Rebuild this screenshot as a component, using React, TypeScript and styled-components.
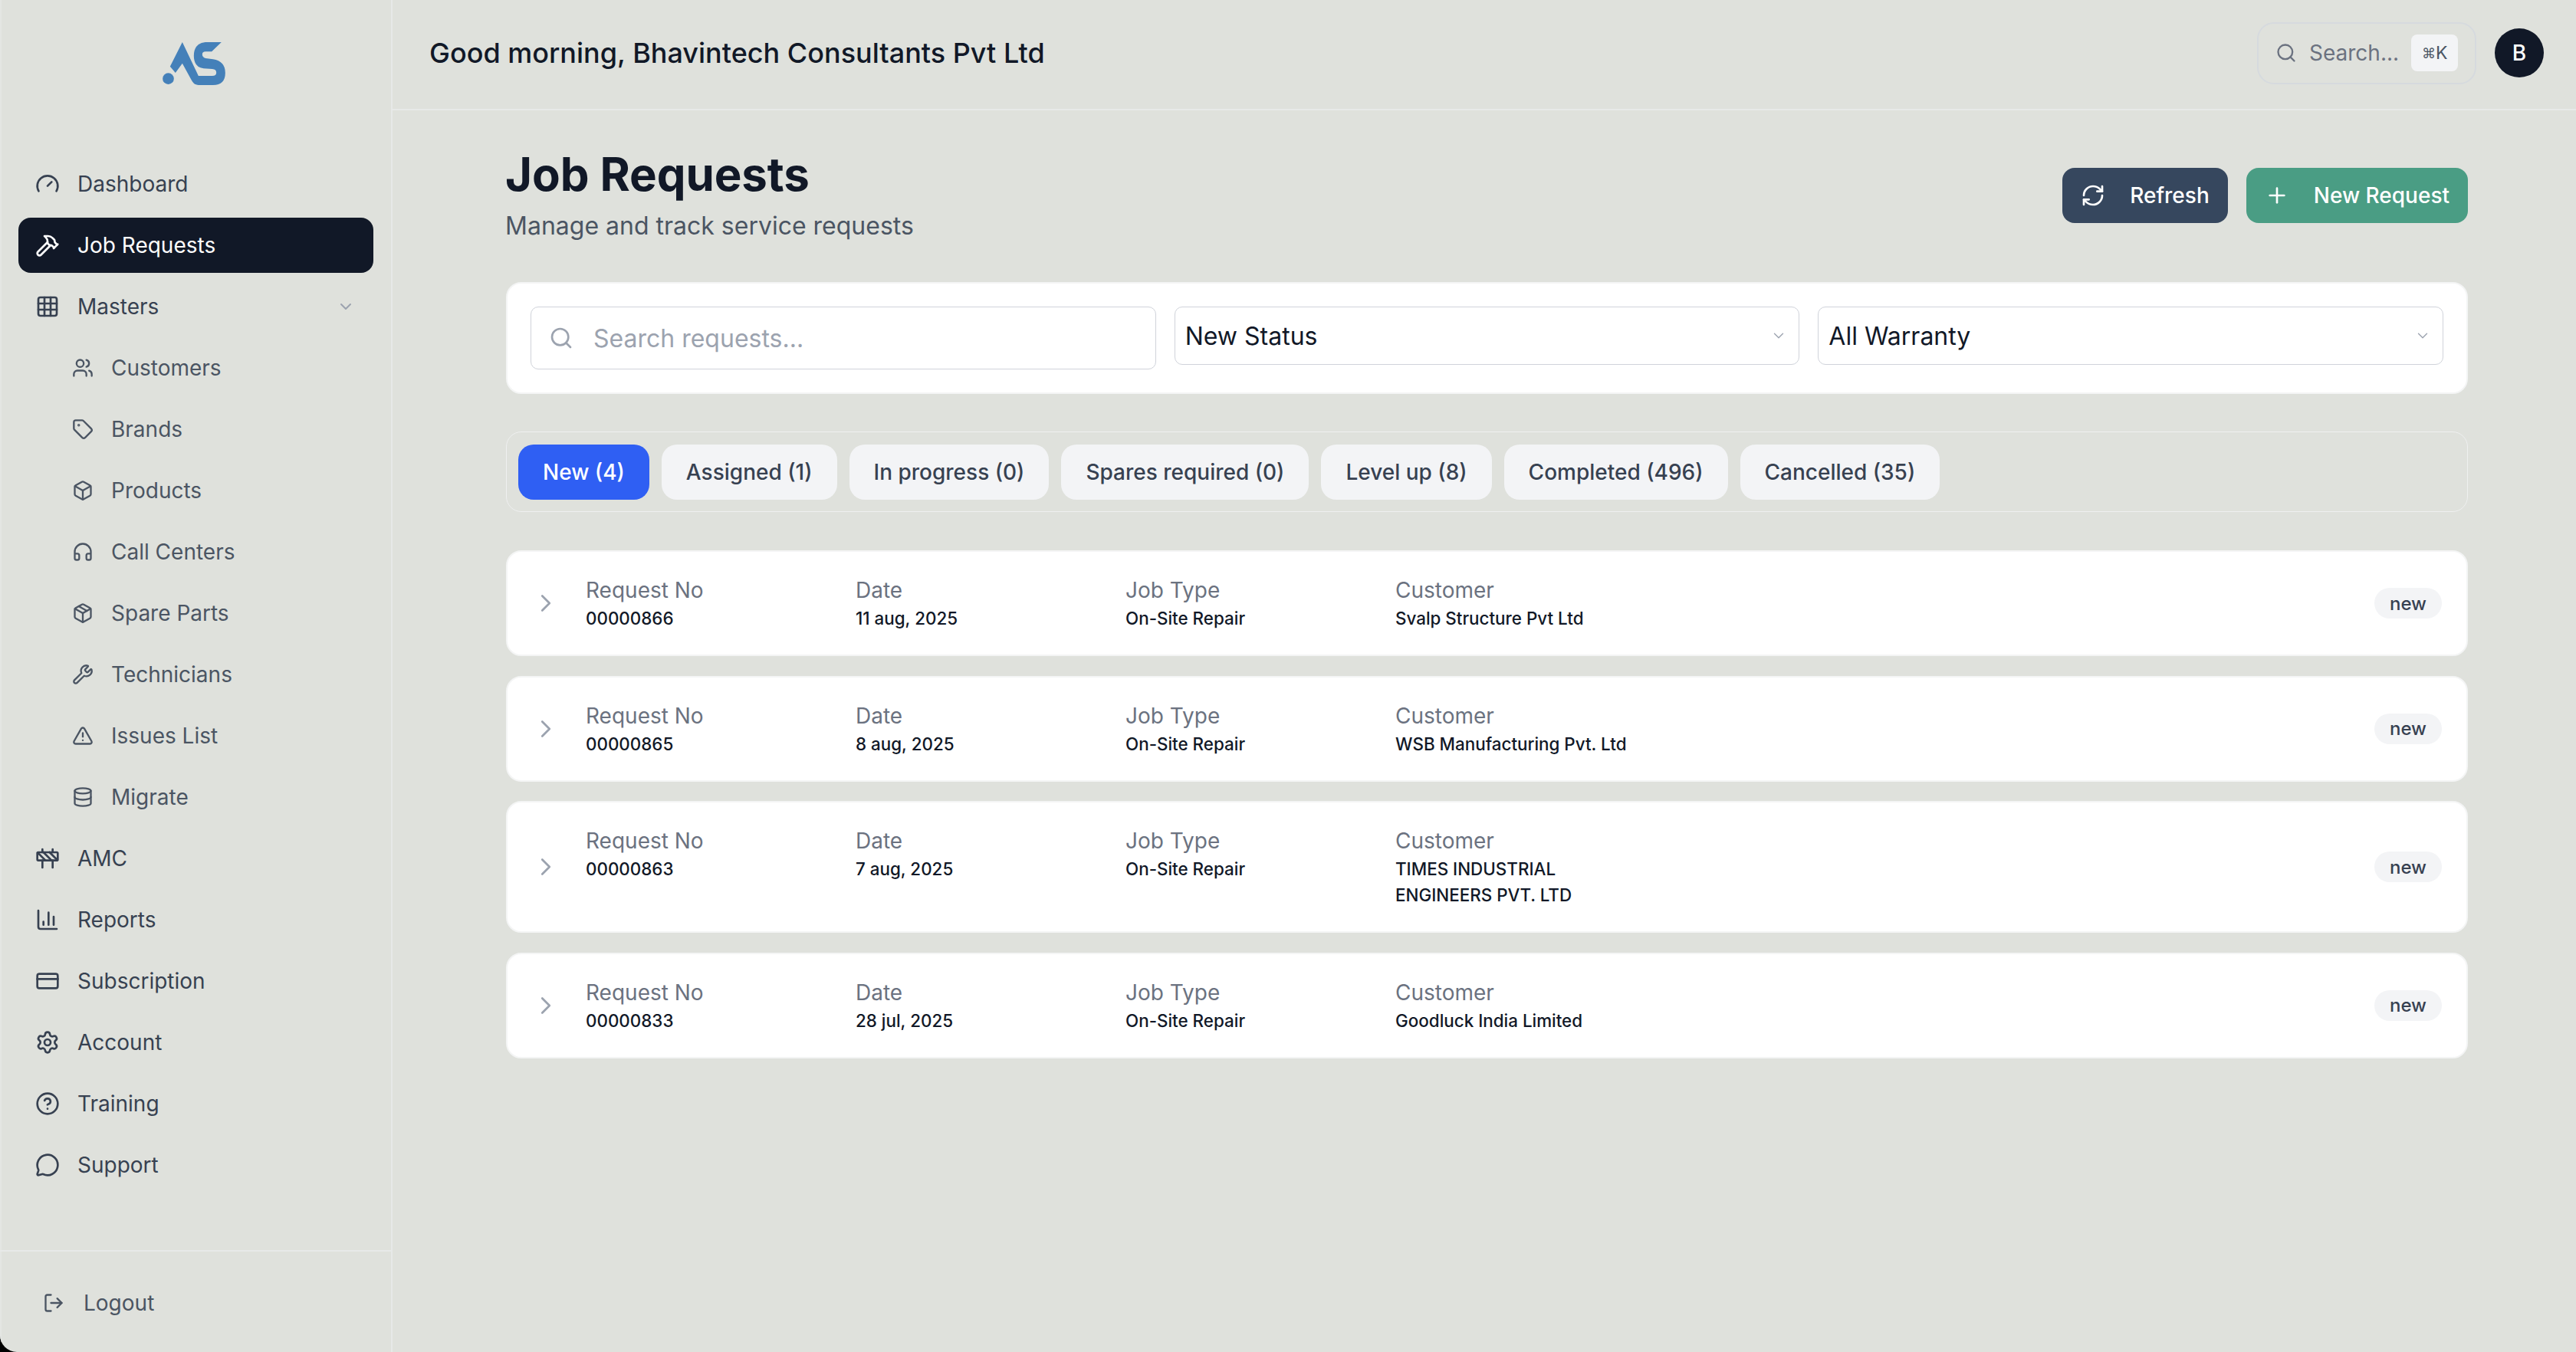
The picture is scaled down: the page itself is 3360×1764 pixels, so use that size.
import React from "react";
import styled, { createGlobalStyle } from "styled-components";
import {
  Gauge, Hammer, Grid3x3, Users, Tag, Box, Headphones, Package, Wrench, TriangleAlert, Database,
  Construction, ChartColumn, CreditCard, Settings, CircleHelp, MessageCircle, LogOut, ChevronDown,
  ChevronRight, Search, RefreshCw, Plus,
} from "lucide-react";

const Global = createGlobalStyle`
  html, body { margin: 0; padding: 0; background: #000; }
  * { box-sizing: border-box; }
  body { font-family: Inter, "Liberation Sans", sans-serif; }
`;

const Shell = styled.div`
  display: flex;
  width: 3360px;
  height: 1764px;
  background: #dfe1dc;
  border-radius: 0 0 0 22px;
  overflow: hidden;
`;

const Sidebar = styled.aside`
  width: 512px;
  flex: none;
  display: flex;
  flex-direction: column;
  border-right: 2px solid #e7e9e8;
  border-left: 2px solid #e4e6e3;
`;

const LogoWrap = styled.div`
  display: flex;
  justify-content: center;
  padding: 55px 6px 93px 0;
`;

const Nav = styled.nav`
  flex: 1;
  display: flex;
  flex-direction: column;
  gap: 8px;
  padding: 0 23px 0 22px;
`;

const NavItem = styled.div<{ $active?: boolean; $sub?: boolean }>`
  height: 72px;
  display: flex;
  align-items: center;
  gap: 23px;
  padding-left: ${(p) => (p.$sub ? "70px" : "22px")};
  padding-right: 24px;
  border-radius: 16px;
  font-size: 28px;
  color: ${(p) => (p.$active ? "#ffffff" : p.$sub ? "#4b5563" : "#374151")};
  background: ${(p) => (p.$active ? "#111827" : "transparent")};
  svg { flex: none; }
`;

const NavLabel = styled.span`
  flex: 1;
`;

const MutedChevron = styled(ChevronDown)`
  color: #9ca3af;
`;

const SideFooter = styled.div`
  height: 133px;
  margin-left: -2px;
  border-top: 2px solid #e7e9e8;
  padding: 49px 0 0 56px;
`;

const LogoutRow = styled.div`
  display: flex;
  align-items: center;
  gap: 25px;
  height: 36px;
  font-size: 28px;
  color: #4b5563;
`;

const Main = styled.div`
  flex: 1;
  min-width: 0;
  display: flex;
  flex-direction: column;
`;

const Header = styled.header`
  height: 144px;
  flex: none;
  border-bottom: 2px solid #e7e9e8;
  display: flex;
  align-items: center;
  justify-content: space-between;
  padding: 0 42px 4px 48px;
`;

const Greeting = styled.h2`
  margin: 0;
  font-size: 36px;
  font-weight: 500;
  color: #111827;
`;

const HeaderRight = styled.div`
  display: flex;
  align-items: center;
  gap: 24px;
`;

const HeaderSearch = styled.div`
  width: 286px;
  height: 81px;
  border: 2px solid #d6dade;
  border-radius: 22px;
  display: flex;
  align-items: center;
  padding: 0 23px 0 22px;
  color: #6b7280;
  font-size: 28px;
  gap: 16px;
  svg { flex: none; }
`;

const Kbd = styled.kbd`
  margin-left: auto;
  width: 61px;
  height: 48px;
  flex: none;
  border-radius: 8px;
  background: #f3f4f6;
  color: #4b5563;
  font-family: Inter, "DejaVu Sans", sans-serif;
  font-size: 23px;
  display: flex;
  align-items: center;
  justify-content: center;
`;

const KbdGlyph = styled.span`
  font-size: 18px;
  font-family: "DejaVu Sans", sans-serif;
`;

const Avatar = styled.div`
  width: 64px;
  height: 64px;
  border-radius: 50%;
  background: #111827;
  color: #fff;
  font-size: 28px;
  font-weight: 500;
  display: flex;
  align-items: center;
  justify-content: center;
`;

const Content = styled.main`
  display: flex;
  flex-direction: column;
  gap: 49px;
  padding: 47px 141px 0 148px;
`;

const PageHead = styled.div`
  display: flex;
  align-items: center;
  justify-content: space-between;
`;

const Title = styled.h1`
  margin: 0 0 0 -1px;
  font-size: 60px;
  line-height: 72px;
  font-weight: 700;
  letter-spacing: -0.1px;
  color: #111827;
`;

const Subtitle = styled.p`
  margin: 8px 0 0 -1px;
  font-size: 32px;
  line-height: 48px;
  color: #4b5563;
`;

const Actions = styled.div`
  display: flex;
  gap: 24px;
`;

const ActionButton = styled.button<{ $color: string }>`
  height: 72px;
  border: 0;
  border-radius: 16px;
  padding: 0 24px;
  display: flex;
  align-items: center;
  gap: 32px;
  color: #fff;
  background: ${(p) => p.$color};
  font: 500 28px Inter, sans-serif;
`;

const FilterCard = styled.section`
  background: #fff;
  border: 2px solid #f4f5f5;
  border-radius: 20px;
  padding: 30px;
  display: grid;
  grid-template-columns: repeat(3, 1fr);
  gap: 24px;
  align-items: start;
`;

const SearchField = styled.div`
  height: 82px;
  border: 1px solid #d0d3da;
  border-radius: 10px;
  display: flex;
  align-items: center;
  gap: 26px;
  padding-left: 23px;
  font-size: 32px;
  color: #9ca3af;
`;

const SelectField = styled.div`
  height: 76px;
  border: 1px solid #d0d3da;
  border-radius: 10px;
  display: flex;
  align-items: center;
  justify-content: space-between;
  padding: 0 15px 0 13px;
  font-size: 32px;
  color: #111827;
  svg { color: #9ca3af; }
`;

const TabBar = styled.div`
  display: flex;
  gap: 16px;
  height: 105px;
  align-items: center;
  padding: 0 15px;
  border: 1px solid #eff0f0;
  border-radius: 20px;
`;

const Tab = styled.div<{ $active?: boolean }>`
  height: 72px;
  display: flex;
  align-items: center;
  padding: 0 32px;
  border-radius: 20px;
  font-size: 28px;
  font-weight: 500;
  color: ${(p) => (p.$active ? "#fff" : "#374151")};
  background: ${(p) => (p.$active ? "#2f5ff3" : "#f3f4f6")};
`;

const CardList = styled.div`
  display: flex;
  flex-direction: column;
  gap: 25.5px;
  margin-top: 1px;
`;

const Card = styled.article`
  background: #fff;
  border: 2px solid #f4f5f5;
  border-radius: 20px;
  padding: 30px 32px;
  display: flex;
  align-items: center;
`;

const ExpandIcon = styled(ChevronRight)`
  color: #9ca3af;
  flex: none;
  margin: 0 33px 0 -1px;
`;

const Columns = styled.div`
  flex: 1;
  display: grid;
  grid-template-columns: repeat(4, 320px);
  column-gap: 32px;
`;

const Label = styled.div`
  font-size: 28px;
  line-height: 40px;
  color: #6b7280;
`;

const Value = styled.div`
  font-size: 22.4px;
  line-height: 34px;
  font-weight: 500;
  color: #111827;
`;

const Badge = styled.span`
  height: 40px;
  padding: 0 20px;
  border-radius: 20px;
  background: #f3f4f6;
  color: #374151;
  font-size: 24px;
  font-weight: 500;
  display: flex;
  align-items: center;
`;

const Logo = () => (
  <svg width="82" height="56" viewBox="128 75 245 168" fill="#4480b9">
    <path d="M205 75L268 207L322 207Q338 207 338 194Q338 181 322 180L288 178Q250 172 250 128Q250 80 295 75L358 75L320 112L296 112Q283 112 283 123Q283 134 296 138L325 142Q373 150 373 195Q373 243 325 243L268 243Q250 243 240 222L205 158L178 195L157 170Z" />
    <circle cx="150" cy="218" r="22" />
  </svg>
);

type Item = { label: string; Icon: React.ElementType; sub?: boolean; active?: boolean; caret?: boolean };

const navItems: Item[] = [
  { label: "Dashboard", Icon: Gauge },
  { label: "Job Requests", Icon: Hammer, active: true },
  { label: "Masters", Icon: Grid3x3, caret: true },
  { label: "Customers", Icon: Users, sub: true },
  { label: "Brands", Icon: Tag, sub: true },
  { label: "Products", Icon: Box, sub: true },
  { label: "Call Centers", Icon: Headphones, sub: true },
  { label: "Spare Parts", Icon: Package, sub: true },
  { label: "Technicians", Icon: Wrench, sub: true },
  { label: "Issues List", Icon: TriangleAlert, sub: true },
  { label: "Migrate", Icon: Database, sub: true },
  { label: "AMC", Icon: Construction },
  { label: "Reports", Icon: ChartColumn },
  { label: "Subscription", Icon: CreditCard },
  { label: "Account", Icon: Settings },
  { label: "Training", Icon: CircleHelp },
  { label: "Support", Icon: MessageCircle },
];

const tabs = ["New (4)", "Assigned (1)", "In progress (0)", "Spares required (0)", "Level up (8)", "Completed (496)", "Cancelled (35)"];

const requests = [
  { no: "00000866", date: "11 aug, 2025", customer: "Svalp Structure Pvt Ltd" },
  { no: "00000865", date: "8 aug, 2025", customer: "WSB Manufacturing Pvt. Ltd" },
  { no: "00000863", date: "7 aug, 2025", customer: "TIMES INDUSTRIAL ENGINEERS PVT. LTD" },
  { no: "00000833", date: "28 jul, 2025", customer: "Goodluck India Limited" },
];

export default function App() {
  return (
    <Shell>
      <Global />
      <Sidebar>
        <LogoWrap><Logo /></LogoWrap>
        <Nav>
          {navItems.map(({ label, Icon, sub, active, caret }) => (
            <NavItem key={label} $sub={sub} $active={active}>
              <Icon size={sub ? 28 : 32} />
              <NavLabel>{label}</NavLabel>
              {caret && <MutedChevron size={24} />}
            </NavItem>
          ))}
        </Nav>
        <SideFooter>
          <LogoutRow><LogOut size={28} />Logout</LogoutRow>
        </SideFooter>
      </Sidebar>
      <Main>
        <Header>
          <Greeting>Good morning, Bhavintech Consultants Pvt Ltd</Greeting>
          <HeaderRight>
            <HeaderSearch>
              <Search size={28} />
              <span>Search...</span>
              <Kbd><KbdGlyph>⌘</KbdGlyph>K</Kbd>
            </HeaderSearch>
            <Avatar>B</Avatar>
          </HeaderRight>
        </Header>
        <Content>
          <PageHead>
            <div>
              <Title>Job Requests</Title>
              <Subtitle>Manage and track service requests</Subtitle>
            </div>
            <Actions>
              <ActionButton $color="#36475e"><RefreshCw size={32} />Refresh</ActionButton>
              <ActionButton $color="#4a9d84"><Plus size={32} />New Request</ActionButton>
            </Actions>
          </PageHead>
          <FilterCard>
            <SearchField><Search size={32} />Search requests...</SearchField>
            <SelectField>New Status<ChevronDown size={22} strokeWidth={1.5} /></SelectField>
            <SelectField>All Warranty<ChevronDown size={22} strokeWidth={1.5} /></SelectField>
          </FilterCard>
          <TabBar>
            {tabs.map((t, i) => <Tab key={t} $active={i === 0}>{t}</Tab>)}
          </TabBar>
          <CardList>
            {requests.map((r) => (
              <Card key={r.no}>
                <ExpandIcon size={38} strokeWidth={1.75} />
                <Columns>
                  <div><Label>Request No</Label><Value>{r.no}</Value></div>
                  <div><Label>Date</Label><Value>{r.date}</Value></div>
                  <div><Label>Job Type</Label><Value>On-Site Repair</Value></div>
                  <div><Label>Customer</Label><Value>{r.customer}</Value></div>
                </Columns>
                <Badge>new</Badge>
              </Card>
            ))}
          </CardList>
        </Content>
      </Main>
    </Shell>
  );
}
